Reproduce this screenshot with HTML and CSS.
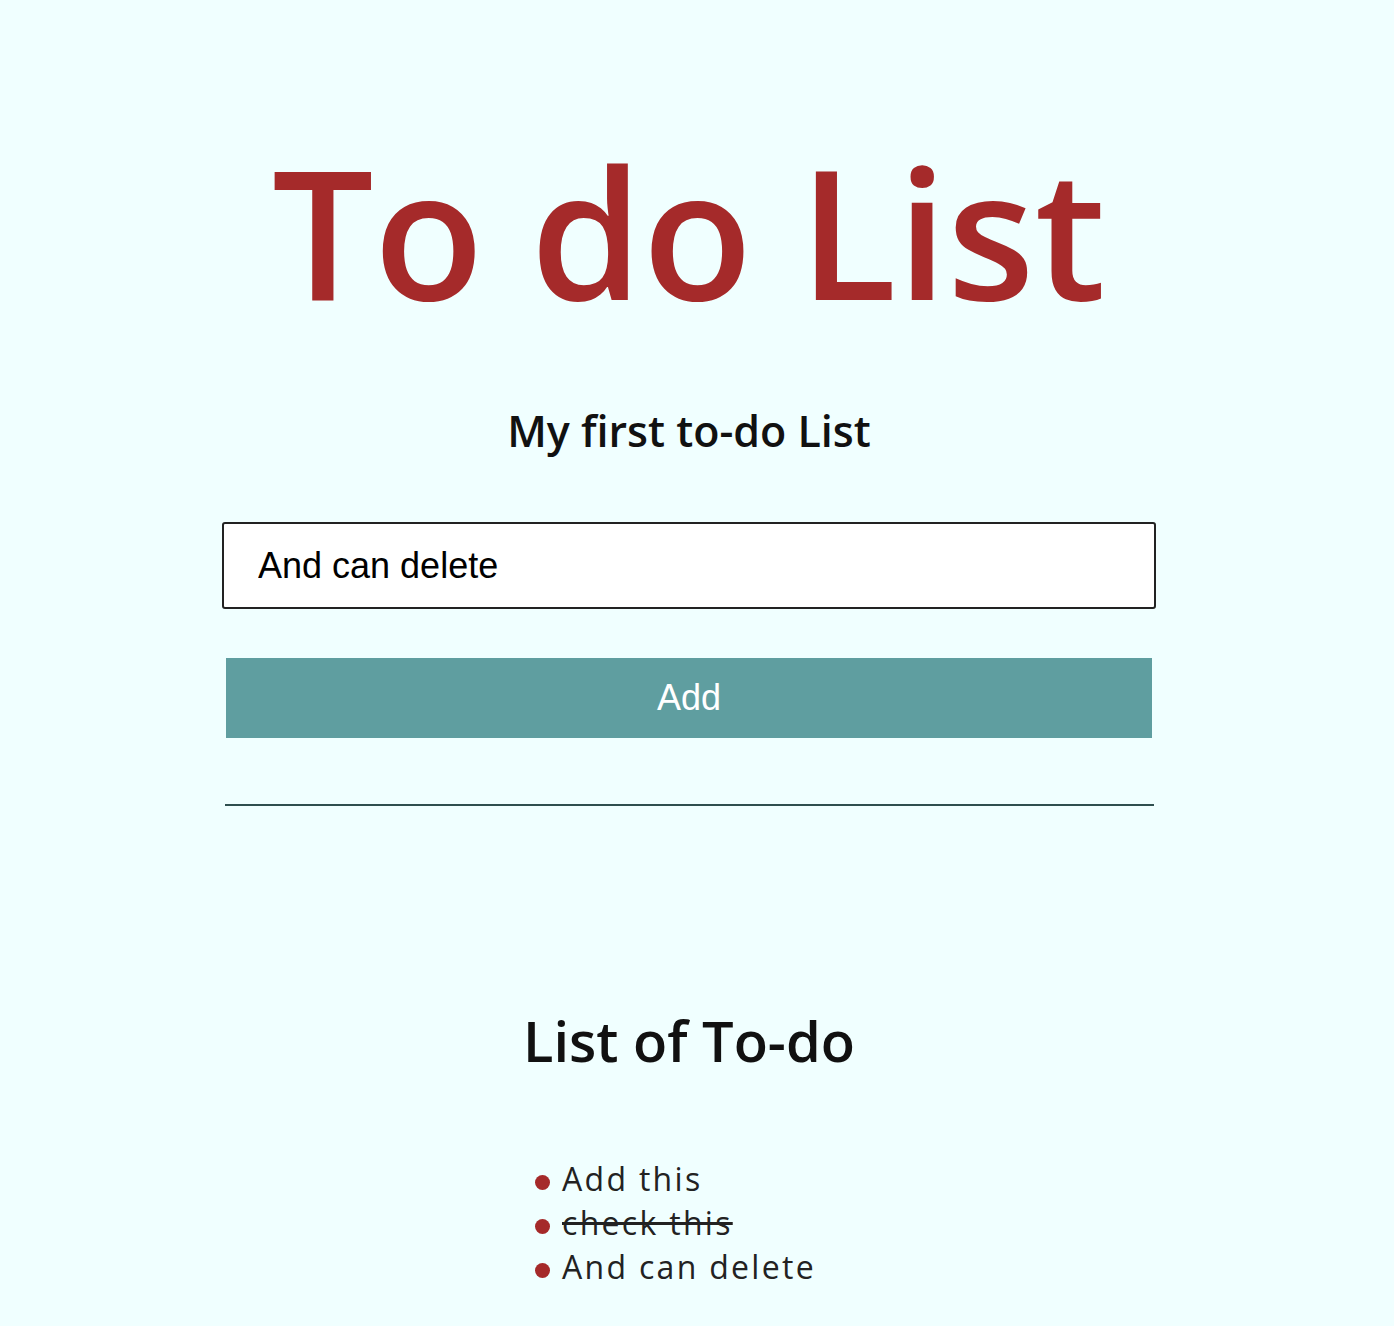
FILE: index.html
```html
<!DOCTYPE html>
<html lang="en">
<head>
<meta charset="utf-8">
<title>To do List</title>
<link rel="stylesheet" href="styles.css">
</head>
<body>
<div class="page">
  <h1 class="title">To do List</h1>
  <h2 class="subtitle">My first to-do List</h2>
  <form class="form">
    <input class="field" type="text" value="And can delete">
    <button class="add" type="button">Add</button>
  </form>
  <hr class="rule">
  <h2 class="list-title">List of To-do</h2>
  <ul class="todos">
    <li class="todo">Add this</li>
    <li class="todo done">check this</li>
    <li class="todo">And can delete</li>
  </ul>
</div>
</body>
</html>
```
FILE: styles.css
```css
html, body {
  margin: 0;
  padding: 0;
  background: #f0ffff;
}
body {
  font-family: "Open Sans", "DejaVu Sans", sans-serif;
  color: #111;
}
.page {
  width: 934px;
  margin: 0 auto;
  padding: 1px 16px 40px 0;
  display: flex;
  flex-direction: column;
  align-items: center;
}
.title {
  margin: 120px 0 0;
  font-size: 180px;
  line-height: 220px;
  font-weight: 600;
  color: #a52a2a;
}
.subtitle {
  margin: 60px 0 0;
  font-size: 43px;
  line-height: 60px;
  font-weight: 600;
}
.form {
  width: 100%;
  display: flex;
  flex-direction: column;
  align-items: center;
  margin-top: 61px;
}
.field {
  box-sizing: border-box;
  width: 934px;
  height: 87px;
  border: 2px solid #222;
  border-radius: 3px;
  background: #fff;
  padding: 0 34px;
  font-family: "Liberation Sans", Arial, sans-serif;
  font-size: 36px;
  color: #000;
}
.add {
  margin-top: 49px;
  width: 926px;
  height: 80px;
  border: none;
  background: #5f9ea0;
  color: #fff;
  font-family: "Liberation Sans", Arial, sans-serif;
  font-size: 36px;
}
.rule {
  width: 929px;
  margin: 66px 0 0;
  border: none;
  border-top: 2px solid #2f4f4f;
}
.list-title {
  margin: 199px 0 0;
  font-size: 56px;
  line-height: 70px;
  font-weight: 600;
}
.todos {
  margin: 82px 0 0;
  padding: 0;
  list-style: none;
  width: 308px;
}
.todo {
  font-size: 32px;
  line-height: 44px;
  letter-spacing: 2.3px;
  font-weight: 500;
  color: #222;
  display: flex;
  align-items: center;
  gap: 12px;
}
.todo::before {
  content: "";
  flex: none;
  width: 15px;
  height: 15px;
  border-radius: 50%;
  background: #a52a2a;
  margin-top: 6px;
}
.done {
  text-decoration: line-through;
}
```
